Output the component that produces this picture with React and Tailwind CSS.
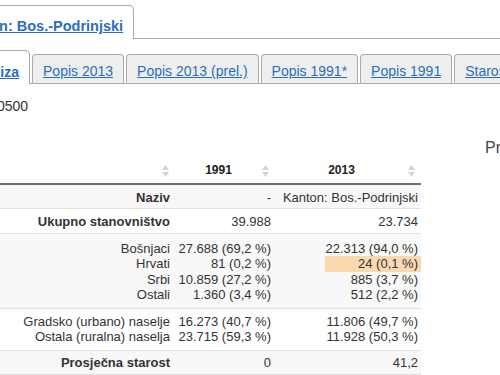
import clsx from "clsx";

const tabs = ["Popis 2013", "Popis 2013 (prel.)", "Popis 1991*", "Popis 1991", "Starost"];

function SortIcon() {
  return (
    <svg width="7" height="12" viewBox="0 0 7 12" className="shrink-0">
      <path d="M0 5 L3.5 0 L7 5 Z" fill="#d4d4d4" />
      <path d="M0 7 L7 7 L3.5 12 Z" fill="#d4d4d4" />
    </svg>
  );
}

// vrijednost u ćeliji: blok poravnat desno
function Lines({ items, highlight }) {
  return (
    <div className="flex justify-end">
      <div className="text-right">
        {items.map((t, i) => (
          <div
            key={i}
            className={clsx("pr-[3px] leading-[15.5px]", highlight === i && "bg-[#fad9b1]")}
          >
            {t}
          </div>
        ))}
      </div>
    </div>
  );
}

const rows = [
  {
    label: ["Naziv"],
    bold: true,
    a: ["-"],
    b: ["Kanton: Bos.-Podrinjski"],
    bg: "bg-[#f8f8f8]",
    py: "pt-[5px] pb-[3px]",
  },
  {
    label: ["Ukupno stanovništvo"],
    bold: true,
    a: ["39.988"],
    b: ["23.734"],
    bg: "bg-white",
    py: "pt-[5px] pb-[3px]",
  },
  {
    label: ["Bošnjaci", "Hrvati", "Srbi", "Ostali"],
    a: ["27.688 (69,2 %)", "81 (0,2 %)", "10.859 (27,2 %)", "1.360 (3,4 %)"],
    b: ["22.313 (94,0 %)", "24 (0,1 %)", "885 (3,7 %)", "512 (2,2 %)"],
    hl: 1,
    bg: "bg-[#f8f8f8]",
    py: "pt-[7px] pb-[5px]",
  },
  {
    label: ["Gradsko (urbano) naselje", "Ostala (ruralna) naselja"],
    a: ["16.273 (40,7 %)", "23.715 (59,3 %)"],
    b: ["11.806 (49,7 %)", "11.928 (50,3 %)"],
    bg: "bg-white",
    py: "py-[5px]",
  },
  {
    label: ["Prosječna starost"],
    bold: true,
    a: ["0"],
    b: ["41,2"],
    bg: "bg-[#f8f8f8]",
    py: "py-[4px]",
  },
];

export default function App() {
  return (
    <div className="w-[500px] h-[375px] overflow-hidden bg-white pt-[5px] font-['Liberation_Sans',Arial,sans-serif] text-[#333]">
      {/* Gornji tab */}
      <div className="flex h-[34px] items-end border-b border-[#aaa]">
        <div className="-mb-px -ml-[53px] h-[34px] rounded-tr-[5px] border border-b-0 border-[#aaa] bg-white px-[10px] pt-[8px]">
          <span className="text-[14.5px] font-bold leading-[20px] text-[#2a6ebd] underline">
            Kanton: Bos.-Podrinjski
          </span>
        </div>
      </div>

      {/* Drugi red tabova */}
      <div className="mt-[11px] flex h-[34px] items-end border-b border-[#aaa] whitespace-nowrap">
        <div className="-mb-px -ml-[41px] h-[34px] shrink-0 rounded-tr-[5px] border border-b-0 border-[#aaa] bg-white px-[10px] pt-[9px]">
          <span className="text-[14px] font-bold leading-[20px] text-[#2a6ebd] underline">Analiza</span>
        </div>
        {tabs.map((t) => (
          <div
            key={t}
            className="ml-[2px] h-[29px] shrink-0 rounded-t-[4px] border border-b-0 border-[#aaa] bg-[#eeeeee] px-[10px] pt-[4px]"
          >
            <span className="text-[14px] leading-[20px] text-[#2a6ebd] underline">{t}</span>
          </div>
        ))}
      </div>

      <div className="-ml-[3px] mt-[12px] text-[14px] leading-[20px] text-[#333]">0500</div>

      <div className="mt-[22px] flex whitespace-nowrap">
        <div className="-ml-[60px] shrink-0 pt-[21px]">
          <table className="w-[481px] table-fixed border-collapse text-[13px] leading-[15.5px]">
            <colgroup>
              <col className="w-[235px]" />
              <col className="w-[100px]" />
              <col className="w-[146px]" />
            </colgroup>
            <thead>
              <tr className="border-b-2 border-[#707070]">
                {["", "1991", "2013"].map((h, i) => (
                  <th key={i} className="py-[4px] pr-[6px] font-normal">
                    <div className="flex items-center">
                      <span className="flex-1 text-center text-[12px] font-bold leading-[15.5px] text-[#222]">
                        {h}
                      </span>
                      <SortIcon />
                    </div>
                  </th>
                ))}
              </tr>
            </thead>
            <tbody>
              {rows.map((r, i) => (
                <tr key={i} className={clsx("border-b border-[#e2e2e2]", r.bg)}>
                  <td className={clsx("pr-[2px] align-top", r.py, r.bold && "font-bold")}>
                    <Lines items={r.label} />
                  </td>
                  <td className={clsx("pr-[1px] align-top", r.py)}>
                    <Lines items={r.a} />
                  </td>
                  <td className={clsx("align-top", r.py)}>
                    <Lines items={r.b} highlight={r.hl} />
                  </td>
                </tr>
              ))}
            </tbody>
          </table>
        </div>
        <div className="ml-[64px] shrink-0 text-[16px] leading-[20px] text-[#444]">Prikaz podataka</div>
      </div>
    </div>
  );
}
